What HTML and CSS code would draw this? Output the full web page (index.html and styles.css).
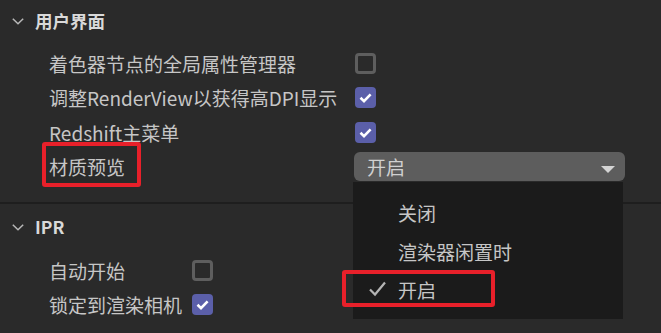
FILE: index.html
```html
<!DOCTYPE html>
<html lang="zh-CN">
<head>
<meta charset="utf-8">
<link rel="stylesheet" href="styles.css">
</head>
<body>
<div class="panel">
  <section class="section first">
    <div class="header">
      <svg class="chev" width="12" height="7" viewBox="0 0 12 7"><path d="M0.8 0.8 L6 5.8 L11.2 0.8" fill="none" stroke="#b8b8b8" stroke-width="1.5"/></svg>
      <span class="title">用户界面</span>
    </div>
    <div class="rows wide">
      <div class="label">着色器节点的全局属性管理器</div>
      <div class="ctl"><span class="cb"></span></div>
      <div class="label">调整RenderView以获得高DPI显示</div>
      <div class="ctl"><span class="cb on"><svg viewBox="0 0 21 21" width="21" height="21"><path d="M5.5 10.8 L9 14.2 L15.6 7.3" fill="none" stroke="#fff" stroke-width="2.6"/></svg></span></div>
      <div class="label">Redshift主菜单</div>
      <div class="ctl"><span class="cb on"><svg viewBox="0 0 21 21" width="21" height="21"><path d="M5.5 10.8 L9 14.2 L15.6 7.3" fill="none" stroke="#fff" stroke-width="2.6"/></svg></span></div>
      <div class="label"><span class="mark"><span class="hl hl1"></span>材质预览</span></div>
      <div class="ctl">
        <div class="dropdown">
          <span class="dd-text">开启</span>
          <span class="dd-arrow"></span>
          <div class="popup">
            <div class="item">关闭</div>
            <div class="item">渲染器闲置时</div>
            <div class="item sel">
              <span class="hl hl2"></span>
              <svg class="tick" width="18" height="16" viewBox="0 0 18 16"><path d="M1 8.5 L6 13.5 L16 1.5" fill="none" stroke="#b4b4b4" stroke-width="2.2"/></svg>
              开启
            </div>
          </div>
        </div>
      </div>
    </div>
  </section>
  <div class="divider"></div>
  <section class="section second">
    <div class="header">
      <svg class="chev" width="12" height="7" viewBox="0 0 12 7"><path d="M0.8 0.8 L6 5.8 L11.2 0.8" fill="none" stroke="#b8b8b8" stroke-width="1.5"/></svg>
      <span class="title">IPR</span>
    </div>
    <div class="rows narrow">
      <div class="label">自动开始</div>
      <div class="ctl"><span class="cb"></span></div>
      <div class="label">锁定到渲染相机</div>
      <div class="ctl"><span class="cb on"><svg viewBox="0 0 21 21" width="21" height="21"><path d="M5.5 10.8 L9 14.2 L15.6 7.3" fill="none" stroke="#fff" stroke-width="2.6"/></svg></span></div>
    </div>
  </section>
</div>
</body>
</html>
```
FILE: styles.css
```css
html, body {
  margin: 0;
  padding: 0;
  background: #2a2a2a;
  width: 661px;
  height: 333px;
  overflow: hidden;
}
body {
  font-family: "Noto Sans CJK SC", "Noto Sans", sans-serif;
  color: #c6c6c6;
}
.panel {
  display: flex;
  flex-direction: column;
}
.header {
  display: flex;
  align-items: center;
  height: 34px;
  padding-left: 12px;
}
.first .header {
  padding-top: 4px;
  margin-bottom: 8px;
}
.second .header {
  padding-top: 6px;
  margin-bottom: 9px;
}
.chev {
  display: block;
  margin-right: 11px;
}
.title {
  font-size: 17.5px;
  font-weight: 700;
  color: #d9d9d9;
  line-height: 1;
}
.rows {
  display: grid;
  grid-auto-rows: 34.5px;
  padding-left: 49px;
}
.rows.wide {
  grid-template-columns: 306px 271px;
  padding-bottom: 18px;
}
.rows.narrow {
  grid-template-columns: 143px 30px;
}
.label {
  display: flex;
  align-items: center;
  font-size: 19px;
  line-height: 1;
  white-space: nowrap;
  position: relative;
}
.mark {
  position: relative;
}
.ctl {
  display: flex;
  align-items: center;
  position: relative;
}
.cb {
  box-sizing: border-box;
  width: 21px;
  height: 21px;
  border: 3px solid #5e5e5e;
  border-radius: 4px;
  display: block;
}
.cb.on {
  border: none;
  background: #5b5fa9;
}
.cb svg {
  display: block;
}
.dropdown {
  position: relative;
  width: 271px;
  height: 29px;
  margin-left: -1px;
  background: #5d5d5d;
  border-radius: 6px;
  display: flex;
  align-items: center;
  padding-left: 13px;
  box-sizing: border-box;
}
.dd-text {
  font-size: 19px;
  line-height: 1;
  color: #d0d0d0;
}
.dd-arrow {
  position: absolute;
  right: 10px;
  top: 14px;
  width: 0;
  height: 0;
  border-left: 7px solid transparent;
  border-right: 7px solid transparent;
  border-top: 7px solid #d4d4d4;
}
.popup {
  position: absolute;
  left: -1px;
  top: 30px;
  width: 270px;
  height: 137px;
  box-sizing: border-box;
  padding-top: 11px;
  background: #1b1b1b;
  z-index: 2;
}
.item {
  position: relative;
  height: 38.5px;
  display: flex;
  align-items: center;
  padding-left: 45px;
  font-size: 19px;
  line-height: 1;
  color: #c6c6c6;
}
.tick {
  position: absolute;
  left: 16px;
  top: 11px;
}
.hl {
  position: absolute;
  box-sizing: border-box;
  border: 4px solid #e8202a;
  border-radius: 3px;
  pointer-events: none;
}
.hl1 {
  left: -7px;
  top: -15px;
  width: 99px;
  height: 45px;
}
.hl2 {
  left: -11px;
  top: 0px;
  width: 153px;
  height: 37px;
}
.divider {
  height: 2px;
  background: #1e1e1e;
}
```
